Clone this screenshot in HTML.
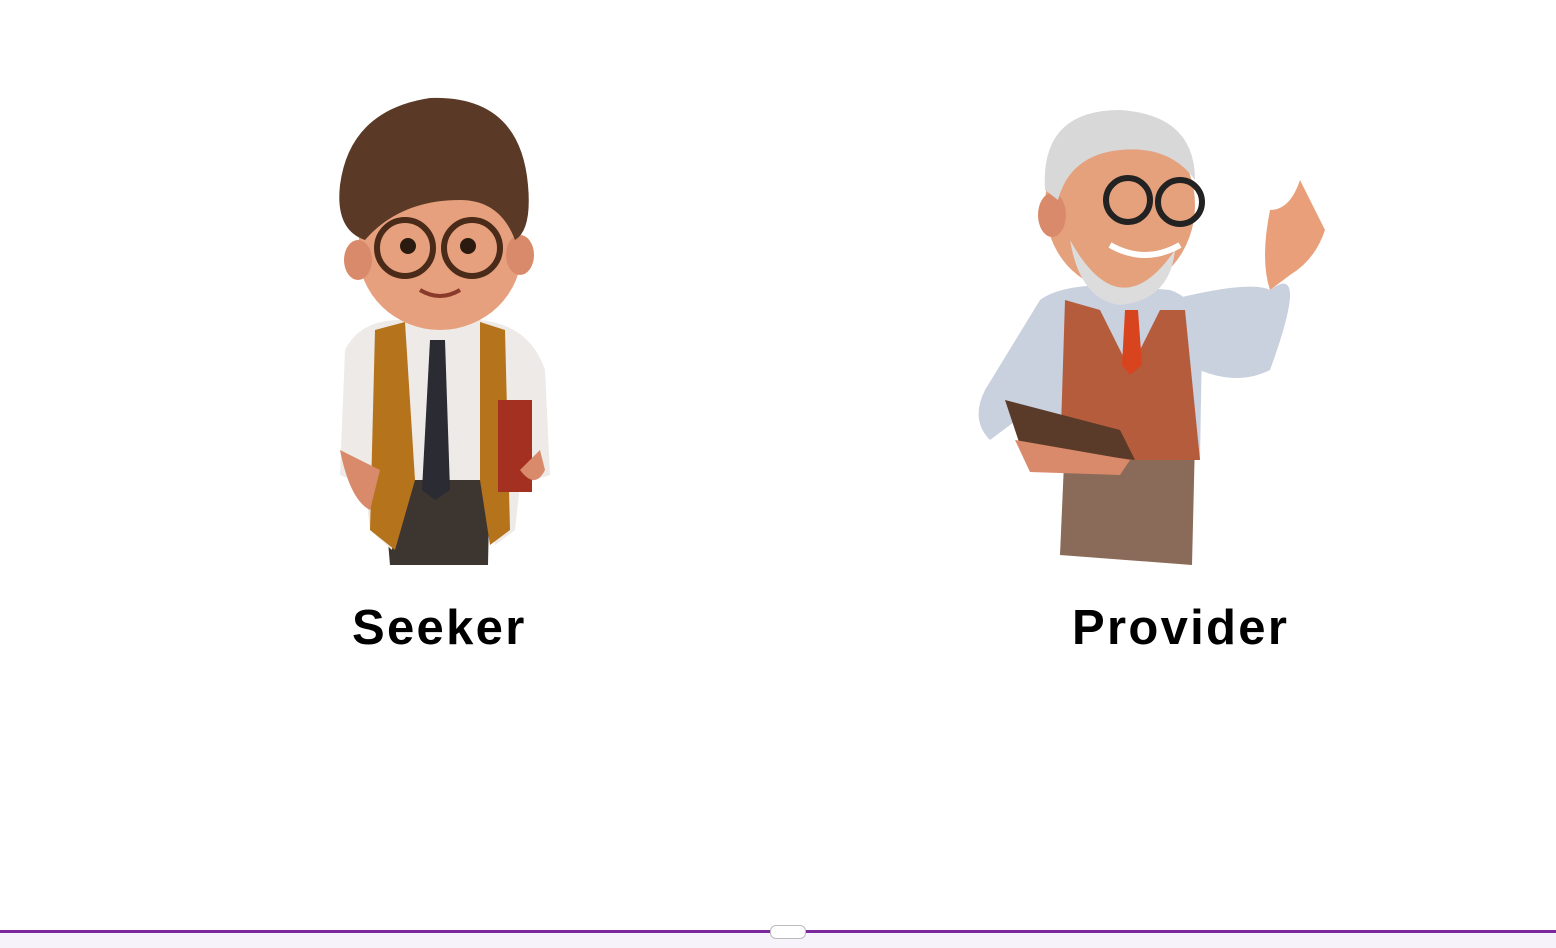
<!DOCTYPE html>
<html><head><meta charset="utf-8"><style>
html,body{margin:0;padding:0;width:1556px;height:948px;background:#fff;overflow:hidden;position:relative;font-family:"Liberation Sans",sans-serif}
.lbl{position:absolute;top:600px;font-size:49px;font-weight:bold;color:#000;letter-spacing:2.3px}
svg{position:absolute}
</style></head><body>
<svg style="left:320px;top:90px" width="250" height="480" viewBox="0 0 250 480">
 <path d="M62 380 L170 380 L168 475 L70 475 Z" fill="#3d3530"/>
 <path d="M25 260 Q40 230 80 230 L160 230 Q210 235 225 280 L230 385 L200 395 L195 440 L175 455 L170 390 L80 390 L72 460 L50 440 L45 395 L20 385 Z" fill="#eeeae8"/>
 <path d="M55 240 L85 232 L95 390 L75 460 L50 440 Z" fill="#b5741c"/>
 <path d="M160 232 L185 240 L190 440 L170 455 L160 390 Z" fill="#b5741c"/>
 <path d="M110 250 L125 250 L130 400 L115 410 L102 400 Z" fill="#2b2b33"/>
 <rect x="178" y="310" width="34" height="92" fill="#a33020"/>
 <path d="M20 360 Q30 410 50 420 L60 380 Z" fill="#d98a6a"/>
 <path d="M200 380 Q215 400 225 380 L220 360 Z" fill="#d98a6a"/>
 <ellipse cx="120" cy="160" rx="82" ry="80" fill="#e7a07e"/>
 <ellipse cx="38" cy="170" rx="14" ry="20" fill="#d98a6a"/>
 <ellipse cx="200" cy="165" rx="14" ry="20" fill="#d98a6a"/>
 <path d="M20 95 Q30 20 110 8 Q200 5 208 95 Q212 140 195 150 Q180 110 140 110 Q80 110 45 150 Q15 140 20 95 Z" fill="#5a3a26"/>
 <circle cx="85" cy="158" r="28" fill="none" stroke="#4a2a18" stroke-width="6"/>
 <circle cx="152" cy="158" r="28" fill="none" stroke="#4a2a18" stroke-width="6"/>
 <circle cx="88" cy="156" r="8" fill="#2a1a10"/><circle cx="148" cy="156" r="8" fill="#2a1a10"/>
 <path d="M100 200 Q120 212 140 200" stroke="#8a3a2a" stroke-width="4" fill="none"/>
</svg>
<svg style="left:970px;top:100px" width="370" height="470" viewBox="0 0 370 470">
 <path d="M95 340 L225 340 L222 465 L90 455 Z" fill="#8a6a58"/>
 <path d="M200 200 Q280 180 300 190 Q340 160 300 270 Q260 290 210 260 Z" fill="#c9d0de"/>
 <path d="M300 190 Q290 160 300 110 Q320 110 330 80 Q345 110 355 130 Q345 160 320 175 Z" fill="#e9a07a"/>
 <path d="M70 200 Q90 185 140 185 L200 190 Q230 200 232 240 L230 360 L90 360 L60 310 L20 340 Q0 320 15 290 Z" fill="#c9d0de"/>
 <path d="M95 200 L130 210 L160 270 L190 210 L215 210 L230 360 L90 360 Z" fill="#b45c3c"/>
 <path d="M155 210 L168 210 L172 265 L160 275 L152 265 Z" fill="#d8441e"/>
 <path d="M35 300 L150 330 L165 360 L50 345 Z" fill="#5a3a28"/>
 <path d="M45 340 L160 360 L150 375 L60 372 Z" fill="#d98a6a"/>
 <ellipse cx="150" cy="105" rx="75" ry="85" fill="#e5a07c"/>
 <ellipse cx="82" cy="115" rx="14" ry="22" fill="#d98a6a"/>
 <path d="M75 90 Q70 10 150 10 Q225 15 225 80 Q200 45 150 50 Q100 55 88 100 Z" fill="#d8d8d8"/>
 <path d="M100 140 Q150 230 205 150 Q200 200 150 205 Q110 200 100 140 Z" fill="#dcdcdc"/>
 <circle cx="158" cy="100" r="22" fill="none" stroke="#222" stroke-width="6"/>
 <circle cx="210" cy="102" r="22" fill="none" stroke="#222" stroke-width="6"/>
 <path d="M140 145 Q175 165 210 145" stroke="#fff" stroke-width="6" fill="none"/>
</svg>
<div class="lbl" style="left:352px">Seeker</div>
<div class="lbl" style="left:1072px">Provider</div>
<div style="position:absolute;left:0;top:933px;width:1556px;height:15px;background:#f6f3fb"></div>
<div style="position:absolute;left:0;top:930px;width:1556px;height:3px;background:#7a2a9c"></div>
<div style="position:absolute;left:770px;top:925px;width:34px;height:12px;background:#fff;border:1px solid #bbb;border-radius:6px"></div>
</body></html>
